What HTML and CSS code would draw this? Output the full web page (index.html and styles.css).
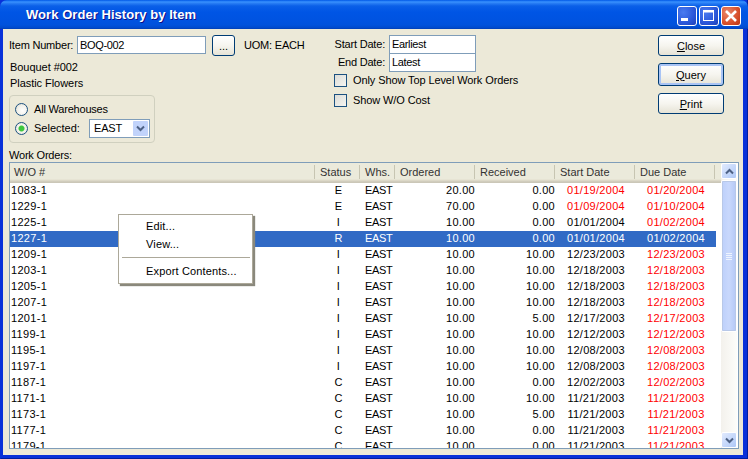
FILE: index.html
```html
<!DOCTYPE html>
<html lang="en">
<head>
<meta charset="utf-8">
<title>Work Order History by Item</title>
<link rel="stylesheet" href="styles.css">
</head>
<body>
<div class="window">
  <header class="titlebar">
    <span class="title">Work Order History by Item</span>
    <div class="winbtns">
      <div class="winbtn"><svg width="20" height="20" viewBox="0 0 20 20"><rect x="4" y="12" width="7" height="3" fill="#fff"/></svg></div>
      <div class="winbtn"><svg width="20" height="20" viewBox="0 0 20 20"><rect x="4.5" y="4.5" width="10" height="10" fill="none" stroke="#fff" stroke-width="1"/><rect x="4" y="4" width="11" height="2.5" fill="#fff"/></svg></div>
      <div class="winbtn close"><svg width="20" height="20" viewBox="0 0 20 20"><path d="M5 5l10 10M15 5L5 15" stroke="#fff" stroke-width="2.6" fill="none"/></svg></div>
    </div>
  </header>
  <main class="client">
    <section class="top">
      <div class="col-left">
        <div class="item-row">
          <label class="lbl">Item Number:</label>
          <div class="field item-field">BOQ-002</div>
          <div class="btn dots">...</div>
          <span class="uom">UOM: EACH</span>
        </div>
        <div class="desc first">Bouquet #002</div>
        <div class="desc">Plastic Flowers</div>
        <div class="group">
          <div class="radio-row"><span class="radio"></span><span class="all-lbl">All Warehouses</span></div>
          <div class="radio-row sel"><span class="radio on"></span><span class="sel-lbl">Selected:</span>
            <div class="combo"><span>EAST</span><span class="combo-arrow"><svg width="9" height="7" viewBox="0 0 9 7"><path d="M1 1.5l3.5 3.5 3.5-3.5" fill="none" stroke="#4d6185" stroke-width="2"/></svg></span></div>
          </div>
        </div>
      </div>
      <div class="col-mid">
        <div class="date-row"><span class="date-lbl">Start Date:</span><div class="field date-field">Earliest</div></div>
        <div class="date-row"><span class="date-lbl">End Date:</span><div class="field date-field">Latest</div></div>
        <div class="check-row first"><span class="check"></span><span>Only Show Top Level Work Orders</span></div>
        <div class="check-row"><span class="check"></span><span>Show W/O Cost</span></div>
      </div>
      <div class="col-right">
        <div class="btn action"><span><u>C</u>lose</span></div>
        <div class="btn action focus"><span><u>Q</u>uery</span></div>
        <div class="btn action"><span><u>P</u>rint</span></div>
      </div>
    </section>
    <div class="list-label">Work Orders:</div>
    <section class="list">
      <div class="list-main">
        <div class="row head">
          <div class="hc">W/O #</div><div class="hc">Status</div><div class="hc">Whs.</div><div class="hc">Ordered</div><div class="hc">Received</div><div class="hc">Start Date</div><div class="hc">Due Date</div><div class="hc last"></div>
        </div>
        <div class="rows">
          <div class="row"><div>1083-1</div><div class="c">E</div><div class="w">EAST</div><div class="r">20.00</div><div class="r">0.00</div><div class="c red">01/19/2004</div><div class="c red">01/20/2004</div></div>
          <div class="row"><div>1229-1</div><div class="c">E</div><div class="w">EAST</div><div class="r">70.00</div><div class="r">0.00</div><div class="c red">01/09/2004</div><div class="c red">01/10/2004</div></div>
          <div class="row"><div>1225-1</div><div class="c">I</div><div class="w">EAST</div><div class="r">10.00</div><div class="r">0.00</div><div class="c">01/01/2004</div><div class="c red">01/02/2004</div></div>
          <div class="row selected"><div>1227-1</div><div class="c">R</div><div class="w">EAST</div><div class="r">10.00</div><div class="r">0.00</div><div class="c">01/01/2004</div><div class="c">01/02/2004</div></div>
          <div class="row"><div>1209-1</div><div class="c">I</div><div class="w">EAST</div><div class="r">10.00</div><div class="r">10.00</div><div class="c">12/23/2003</div><div class="c red">12/23/2003</div></div>
          <div class="row"><div>1203-1</div><div class="c">I</div><div class="w">EAST</div><div class="r">10.00</div><div class="r">10.00</div><div class="c">12/18/2003</div><div class="c red">12/18/2003</div></div>
          <div class="row"><div>1205-1</div><div class="c">I</div><div class="w">EAST</div><div class="r">10.00</div><div class="r">10.00</div><div class="c">12/18/2003</div><div class="c red">12/18/2003</div></div>
          <div class="row"><div>1207-1</div><div class="c">I</div><div class="w">EAST</div><div class="r">10.00</div><div class="r">10.00</div><div class="c">12/18/2003</div><div class="c red">12/18/2003</div></div>
          <div class="row"><div>1201-1</div><div class="c">I</div><div class="w">EAST</div><div class="r">10.00</div><div class="r">5.00</div><div class="c">12/17/2003</div><div class="c red">12/17/2003</div></div>
          <div class="row"><div>1199-1</div><div class="c">I</div><div class="w">EAST</div><div class="r">10.00</div><div class="r">10.00</div><div class="c">12/12/2003</div><div class="c red">12/12/2003</div></div>
          <div class="row"><div>1195-1</div><div class="c">I</div><div class="w">EAST</div><div class="r">10.00</div><div class="r">10.00</div><div class="c">12/08/2003</div><div class="c red">12/08/2003</div></div>
          <div class="row"><div>1197-1</div><div class="c">I</div><div class="w">EAST</div><div class="r">10.00</div><div class="r">10.00</div><div class="c">12/08/2003</div><div class="c red">12/08/2003</div></div>
          <div class="row"><div>1187-1</div><div class="c">C</div><div class="w">EAST</div><div class="r">10.00</div><div class="r">0.00</div><div class="c">12/02/2003</div><div class="c red">12/02/2003</div></div>
          <div class="row"><div>1171-1</div><div class="c">C</div><div class="w">EAST</div><div class="r">10.00</div><div class="r">10.00</div><div class="c">11/21/2003</div><div class="c red">11/21/2003</div></div>
          <div class="row"><div>1173-1</div><div class="c">C</div><div class="w">EAST</div><div class="r">10.00</div><div class="r">5.00</div><div class="c">11/21/2003</div><div class="c red">11/21/2003</div></div>
          <div class="row"><div>1177-1</div><div class="c">C</div><div class="w">EAST</div><div class="r">10.00</div><div class="r">0.00</div><div class="c">11/21/2003</div><div class="c red">11/21/2003</div></div>
          <div class="row"><div>1179-1</div><div class="c">C</div><div class="w">EAST</div><div class="r">10.00</div><div class="r">0.00</div><div class="c">11/21/2003</div><div class="c red">11/21/2003</div></div>
        </div>
      </div>
      <div class="scrollbar">
        <div class="sb-btn"><svg width="9" height="7" viewBox="0 0 9 7"><path d="M1 5.5l3.5-3.5 3.5 3.5" fill="none" stroke="#4d6185" stroke-width="2"/></svg></div>
        <div class="sb-thumb"><span class="grip"></span><span class="grip"></span><span class="grip"></span><span class="grip"></span></div>
        <div class="sb-track"></div>
        <div class="sb-btn"><svg width="9" height="7" viewBox="0 0 9 7"><path d="M1 1.5l3.5 3.5 3.5-3.5" fill="none" stroke="#4d6185" stroke-width="2"/></svg></div>
      </div>
    </section>
  </main>
  <div class="menu">
    <div class="mi">Edit...</div>
    <div class="mi">View...</div>
    <div class="msep"></div>
    <div class="mi">Export Contents...</div>
  </div>
</div>
</body>
</html>
```
FILE: styles.css
```css
* { box-sizing: border-box; }
html, body { margin: 0; padding: 0; }
body { width: 748px; height: 459px; overflow: hidden; font-family: "Liberation Sans", Arial, sans-serif; font-size: 11px; color: #000; }
.window { position: relative; width: 748px; height: 459px; display: flex; flex-direction: column; background: #0831d9; border-left: 1px solid #0831d9; border-right: 1px solid #001ea0; border-bottom: 1px solid #001ea0; }
.titlebar { height: 29px; flex: none; display: flex; align-items: center; justify-content: space-between; padding: 0 7px 0 26px; margin-left: -1px; margin-right: -1px; border-radius: 7px 7px 0 0; background: linear-gradient(to bottom, #0058e6 0, #3a93ff 2px, #2b80f5 3px, #0a5fe8 6px, #0055e5 12px, #0053e1 20px, #0052dc 25px, #0049cb 28px, #003cb0 29px); }
.title { color: #fff; font: bold 13px "Liberation Sans", sans-serif; letter-spacing: .05px; text-shadow: 1px 1px 0 #0f1089; }
.winbtns { display: flex; gap: 2px; margin-top: 2px; }
.winbtn { width: 20px; height: 20px; border: 1px solid #fff; border-radius: 3px; background: radial-gradient(circle at 30% 30%, #4a7bf0 0, #2b57d9 60%, #1c3fb8 100%); overflow: hidden; }
.winbtn svg { display: block; margin: -1px; }
.winbtn.close { background: radial-gradient(circle at 30% 30%, #e9866a 0, #d8502c 60%, #b83312 100%); }
.client { flex: 1; min-height: 0; margin: 0 4px 3px 2px; background: #ece9d8; display: flex; flex-direction: column; padding: 6px 4px 0 6px; }
.top { display: flex; height: 111px; flex: none; }
.col-left { width: 325px; flex: none; }
.item-row { display: flex; align-items: flex-start; height: 22px; margin-top: 1px; }
.lbl { width: 68px; flex: none; padding-top: 3px; letter-spacing: -.2px; white-space: nowrap; }
.field { background: #fff; border: 1px solid #7f9db9; height: 18px; line-height: 16px; padding-left: 2px; letter-spacing: -.35px; }
.item-field { width: 129px; }
.btn { display: flex; align-items: center; justify-content: center; background: linear-gradient(to bottom, #fff 0, #f6f5ef 50%, #e6e3d6 100%); border: 1px solid #003c74; border-radius: 3px; }
.dots { width: 23px; height: 21px; margin-left: 6px; margin-top: -1px; }
.uom { margin-left: 9px; padding-top: 3px; letter-spacing: -.2px; white-space: nowrap; }
.desc { height: 16px; line-height: 16px; padding-left: 1px; letter-spacing: -.05px; }
.desc.first { margin-top: 1px; }
.group { width: 146px; height: 48px; margin-top: 4px; border: 1px solid #d0d0bf; border-radius: 4px; padding: 4px 0 0 5px; }
.radio-row { display: flex; align-items: center; height: 18px; gap: 6px; }
.radio-row.sel { height: 20px; }
.all-lbl { letter-spacing: -.2px; }
.radio { width: 13px; height: 13px; flex: none; border-radius: 50%; border: 1px solid #1c5180; background: radial-gradient(circle at 60% 60%, #fff 0, #f3f2ec 50%, #d8d6c8 100%); }
.radio.on { background: radial-gradient(circle, #3ec73e 0, #3ec73e 2.5px, #f5f4ee 3.5px, #e5e3d8 100%); }
.sel-lbl { width: 49px; flex: none; }
.combo { width: 61px; height: 19px; border: 1px solid #7f9db9; background: #fff; display: flex; align-items: center; justify-content: space-between; padding: 0 1px 0 4px; letter-spacing: -.2px; }
.combo-arrow { width: 15px; height: 15px; background: #c1d3fb; border-radius: 1px; display: flex; align-items: center; justify-content: center; }
.col-mid { width: 324px; flex: none; }
.date-row { display: flex; align-items: center; height: 18px; }
.date-lbl { width: 51px; flex: none; text-align: right; margin-right: 4px; letter-spacing: -.2px; white-space: nowrap; }
.date-field { width: 87px; flex: none; height: 19px; }
.check-row { display: flex; align-items: center; gap: 6px; height: 14px; margin-top: 6px; letter-spacing: -.1px; }
.check-row.first { margin-top: 2px; }
.check { width: 13px; height: 13px; flex: none; border: 1px solid #1c5180; background: linear-gradient(135deg, #dcdcd7 0, #f5f5f1 100%); }
.col-right { width: 66px; flex: none; display: flex; flex-direction: column; gap: 7px; }
.btn.action { width: 66px; height: 21px; flex: none; }
.btn.focus { height: 23px; box-shadow: inset 0 0 0 2px #a9c4f5; }
.list-label { height: 16px; line-height: 14px; padding-top: 2px; letter-spacing: -.2px; flex: none; }
.list { flex: none; height: 287px; width: 730px; border: 1px solid #7f9db9; display: flex; background: #fff; overflow: hidden; }
.list-main { flex: none; width: 712px; overflow: hidden; }
.row { display: grid; grid-template-columns: 305px 45px 35px 80px 80px 80px 80px; height: 16px; line-height: 15px; width: 706px; letter-spacing: .3px; }
.row > div { padding-left: 1px; overflow: hidden; white-space: nowrap; }
.row > .c { text-align: center; padding-left: 2px; }
.row > .w { padding-left: 5px; letter-spacing: -.3px; }
.row > .r { text-align: right; padding: 0; }
.red { color: #f00; }
.selected { background: #316ac5; color: #fff; }
.head { grid-template-columns: 305px 45px 35px 80px 80px 80px 80px 1fr; width: 712px; height: 20px; line-height: 17px; background: linear-gradient(to bottom, #ebeadb 0, #ebeadb 16px, #e2decd 17px, #d6d2c2 18px, #cbc7b8 19px); color: #333; letter-spacing: 0; }
.head .hc { height: 14px; margin-top: 2px; line-height: 14px; padding-left: 5px; border-right: 1px solid #c7c5b2; }
.head .hc:first-child { padding-left: 4px; }
.head .hc.last { border: 0; }
.scrollbar { flex: none; width: 16px; height: 285px; display: flex; flex-direction: column; background: linear-gradient(to right, #f3f1ec, #fdfdfa); margin-left: -1px; }
.sb-btn { width: 16px; height: 16px; flex: none; border: 1px solid #fff; border-radius: 2px; background: linear-gradient(135deg, #e1eafe, #aec8f7); display: flex; align-items: center; justify-content: center; }
.sb-thumb { height: 152px; flex: none; margin-top: 1px; border: 1px solid #fff; outline: 1px solid #b8c8e8; outline-offset: -2px; border-radius: 2px; background: linear-gradient(to right, #bdd0fb, #c9d8fc 50%, #b4c8f6); display: flex; flex-direction: column; align-items: center; justify-content: center; gap: 1px; }
.grip { width: 6px; height: 1px; background: #eef4fe; }
.sb-track { flex: 1; }
.menu { position: absolute; left: 117px; top: 214px; width: 135px; height: 70px; background: #fff; border: 1px solid #aca899; padding: 2px 1px; box-shadow: 2px 2px 1px #8a887c; }
.mi { height: 18px; line-height: 18px; padding-left: 26px; letter-spacing: .15px; }
.msep { height: 1px; background: #aca899; margin: 4px 1px 4px 2px; }
```
